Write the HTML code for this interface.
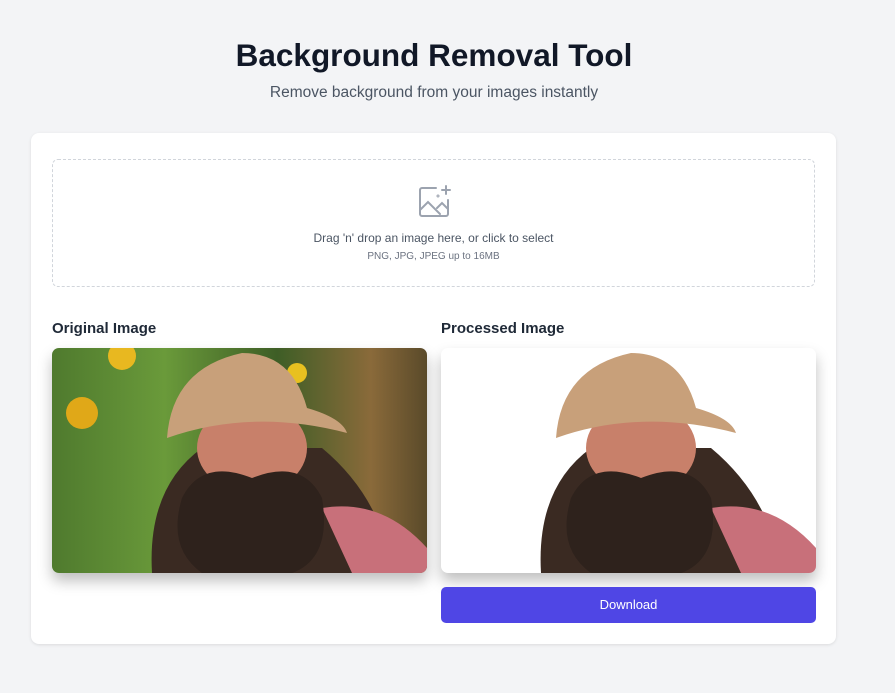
<!DOCTYPE html><html><head><style>
body{margin:0;background:#f3f4f6;font-family:"Liberation Sans",sans-serif;width:895px;height:693px;overflow:hidden;position:relative}
h1{position:absolute;top:37px;left:0;width:868px;text-align:center;margin:0;font-size:31.5px;font-weight:bold;color:#111827}
.sub{position:absolute;top:84px;width:868px;text-align:center;font-size:15.5px;color:#4b5563}
.card{position:absolute;left:31px;top:133px;width:805px;height:511px;background:#fff;border-radius:8px;box-shadow:0 1px 3px rgba(0,0,0,.1)}
.drop{position:absolute;left:21px;top:26px;width:761px;height:126px;border:1px dashed #d1d5db;border-radius:6px;text-align:center}
.t1{position:absolute;top:71px;width:100%;font-size:12px;color:#4b5563}
.t2{position:absolute;top:91px;width:100%;font-size:10px;color:#6b7280}
.lbl{position:absolute;top:187px;font-size:15px;font-weight:bold;color:#1f2937}
.img{position:absolute;top:215px;width:375px;height:225px;border-radius:7px;overflow:hidden;box-shadow:0 8px 14px rgba(0,0,0,.25)}
.btn{position:absolute;left:410px;top:454px;width:375px;height:36px;background:#4f46e5;border-radius:5px;color:#fff;font-size:13px;text-align:center;line-height:36px}
</style></head><body>
<h1>Background Removal Tool</h1>
<div class="sub">Remove background from your images instantly</div>
<div class="card">
<div class="drop">
<svg style="position:absolute;left:364px;top:24px" width="36" height="36" viewBox="0 0 36 36" fill="none" stroke="#9ca3af" stroke-width="2" stroke-linecap="round"><path d="M19 4H5a2 2 0 0 0-2 2v24a2 2 0 0 0 2 2h24a2 2 0 0 0 2-2V16"/><path d="M3 26l8-8 12 12M20 24l5-5 6 6"/><path d="M29 2v8M25 6h8"/><circle cx="21" cy="12" r="0.5"/></svg>
<div class="t1">Drag 'n' drop an image here, or click to select</div>
<div class="t2">PNG, JPG, JPEG up to 16MB</div>
</div>
<div class="lbl" style="left:21px">Original Image</div>
<div class="lbl" style="left:410px">Processed Image</div>
<div class="img" style="left:21px;background:linear-gradient(90deg,#4f7a2e,#6a9a3a 30%,#3e5e26 60%,#8a6a3a 85%,#5a4a2a)">
<svg width="375" height="225"><circle cx="30" cy="65" r="16" fill="#e0a818"/><circle cx="70" cy="8" r="14" fill="#e8b820"/><circle cx="245" cy="25" r="10" fill="#e8c020"/>
<g><path d="M100 225 Q95 140 150 100 L270 100 Q330 150 340 225Z" fill="#3a2a22"/><path d="M270 160 Q330 150 375 200 L375 225 L300 225Z" fill="#c8707a"/><ellipse cx="200" cy="100" rx="55" ry="45" fill="#c8806a"/><path d="M130 150 Q150 110 200 130 Q250 110 270 150 Q280 210 240 225 L150 225 Q115 200 130 150Z" fill="#2e221c"/><path d="M115 90 Q120 20 190 5 Q240 5 255 60 Q290 70 295 85 Q200 60 115 90Z" fill="#c8a07a"/></g></svg></div>
<div class="img" style="left:410px;background:#fff">
<svg width="375" height="225"><path d="M100 225 Q95 140 150 100 L270 100 Q330 150 340 225Z" fill="#3a2a22"/><path d="M270 160 Q330 150 375 200 L375 225 L300 225Z" fill="#c8707a"/><ellipse cx="200" cy="100" rx="55" ry="45" fill="#c8806a"/><path d="M130 150 Q150 110 200 130 Q250 110 270 150 Q280 210 240 225 L150 225 Q115 200 130 150Z" fill="#2e221c"/><path d="M115 90 Q120 20 190 5 Q240 5 255 60 Q290 70 295 85 Q200 60 115 90Z" fill="#c8a07a"/></svg></div>
<div class="btn">Download</div>
</div>
</body></html>
